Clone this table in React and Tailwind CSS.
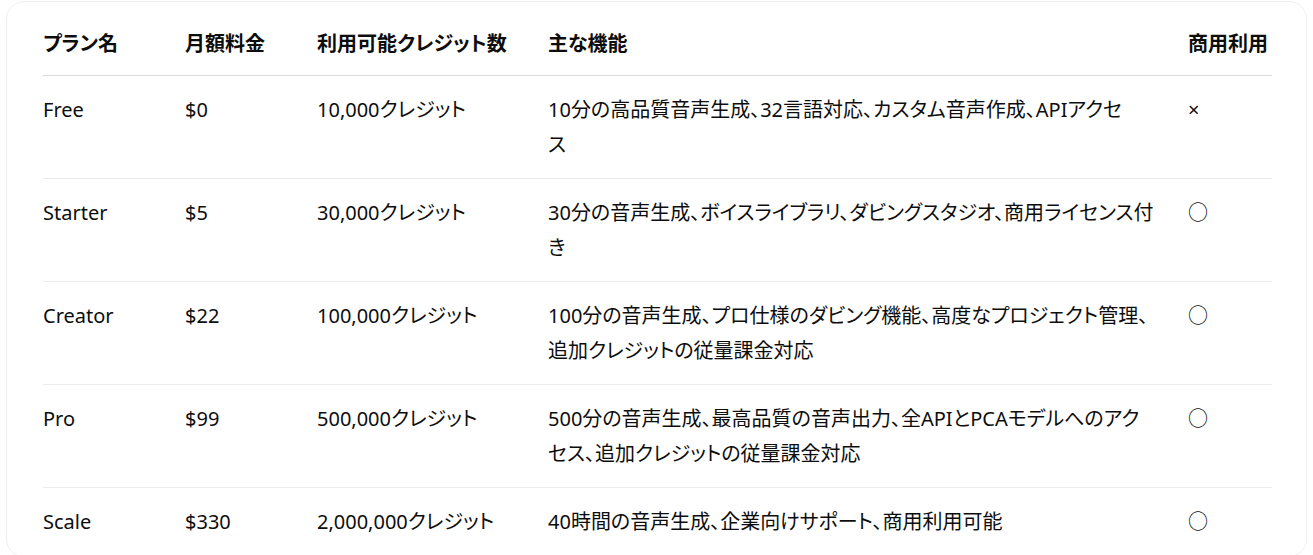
const plans = [
  {
    name: 'Free',
    price: '$0',
    credits: '10,000クレジット',
    features: ['10分の高品質音声生成、32言語対応、カスタム音声作成、APIアクセ', 'ス'],
    commercial: '×',
  },
  {
    name: 'Starter',
    price: '$5',
    credits: '30,000クレジット',
    features: ['30分の音声生成、ボイスライブラリ、ダビングスタジオ、商用ライセンス付', 'き'],
    commercial: '○',
  },
  {
    name: 'Creator',
    price: '$22',
    credits: '100,000クレジット',
    features: ['100分の音声生成、プロ仕様のダビング機能、高度なプロジェクト管理、', '追加クレジットの従量課金対応'],
    commercial: '○',
  },
  {
    name: 'Pro',
    price: '$99',
    credits: '500,000クレジット',
    features: ['500分の音声生成、最高品質の音声出力、全APIとPCAモデルへのアク', 'セス、追加クレジットの従量課金対応'],
    commercial: '○',
  },
  {
    name: 'Scale',
    price: '$330',
    credits: '2,000,000クレジット',
    features: ['40時間の音声生成、企業向けサポート、商用利用可能'],
    commercial: '○',
  },
];

const headers = ['プラン名', '月額料金', '利用可能クレジット数', '主な機能', '商用利用'];

export default function App() {
  return (
    <div className="min-h-screen bg-white pl-[6px] pr-[6px] pt-[1px] text-[#0d0d0d] font-['Noto_Sans','Noto_Sans_CJK_JP',sans-serif] [font-feature-settings:'palt']">
      <div className="rounded-[18px] border border-[#f0f0f0] pl-[36px] pr-[34px]">
        <table className="w-full table-fixed border-collapse text-[20px] leading-[35px]">
          <colgroup>
            <col className="w-[142px]" />
            <col className="w-[132px]" />
            <col className="w-[231px]" />
            <col className="w-[640px]" />
            <col />
          </colgroup>
          <thead>
            <tr className="border-b border-[#d9d9d9]">
              {headers.map((h) => (
                <th key={h} className="pt-[24px] pb-[14px] text-left font-bold whitespace-nowrap">
                  {h}
                </th>
              ))}
            </tr>
          </thead>
          <tbody>
            {plans.map((p) => (
              <tr key={p.name} className="border-b border-[#ececec] align-top">
                <td className="py-4">{p.name}</td>
                <td className="py-4">{p.price}</td>
                <td className="py-4">{p.credits}</td>
                <td className="py-4 pr-[40px] whitespace-nowrap">
                  {p.features.map((line, i) => (
                    <span key={i}>
                      {i > 0 && <br />}
                      {line}
                    </span>
                  ))}
                </td>
                <td className="py-4">{p.commercial}</td>
              </tr>
            ))}
          </tbody>
        </table>
      </div>
    </div>
  );
}
